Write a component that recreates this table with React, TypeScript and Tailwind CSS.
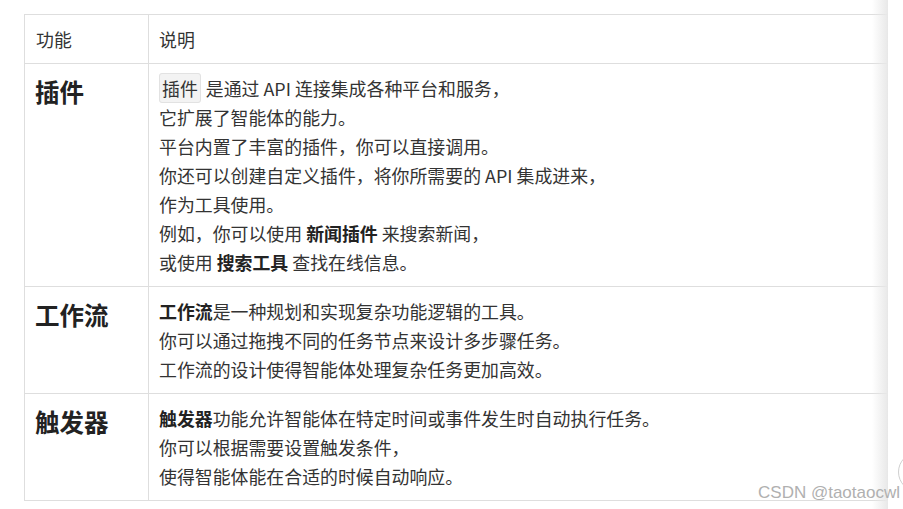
const font = { fontFamily: '"Noto Sans CJK SC", "Noto Sans", sans-serif' };

type Row = { title: string; lines: React.ReactNode[] };

const rows: Row[] = [
  {
    title: "插件",
    lines: [
      <>
        <span className="mr-[5px] rounded-[3px] border border-[#e2e2e2] bg-[#f3f3f3] px-[2px] py-[1px]">插件</span>是通过 API 连接集成各种平台和服务，
      </>,
      "它扩展了智能体的能力。",
      "平台内置了丰富的插件，你可以直接调用。",
      "你还可以创建自定义插件，将你所需要的 API 集成进来，",
      "作为工具使用。",
      <>
        例如，你可以使用 <b className="font-bold text-[#222]">新闻插件</b> 来搜索新闻，
      </>,
      <>
        或使用 <b className="font-bold text-[#222]">搜索工具</b> 查找在线信息。
      </>,
    ],
  },
  {
    title: "工作流",
    lines: [
      <>
        <b className="font-bold text-[#222]">工作流</b>是一种规划和实现复杂功能逻辑的工具。
      </>,
      "你可以通过拖拽不同的任务节点来设计多步骤任务。",
      "工作流的设计使得智能体处理复杂任务更加高效。",
    ],
  },
  {
    title: "触发器",
    lines: [
      <>
        <b className="font-bold text-[#222]">触发器</b>功能允许智能体在特定时间或事件发生时自动执行任务。
      </>,
      "你可以根据需要设置触发条件，",
      "使得智能体能在合适的时候自动响应。",
    ],
  },
];

export default function App() {
  return (
    <div className="relative h-[509px] w-[903px] overflow-hidden bg-white text-[#333]" style={font}>
      <div className="pl-[24px] pt-[14px]">
        <table className="w-[864px] border-collapse text-[17.9px]">
          <thead>
            <tr>
              <th className="w-[124px] border border-[#dedede] pb-[9px] pl-[11px] pt-[10px] text-left font-normal leading-[29px]">
                功能
              </th>
              <th className="border border-[#dedede] pb-[9px] pl-[10px] pt-[10px] text-left font-normal leading-[29px]">
                说明
              </th>
            </tr>
          </thead>
          <tbody>
            {rows.map((r) => (
              <tr key={r.title}>
                <td className="border border-[#dedede] pl-[10px] pt-[10px] align-top text-[24.5px] font-bold leading-[36px] text-[#222]">
                  {r.title}
                </td>
                <td className="border border-[#dedede] pb-[9px] pl-[10px] pt-[10px] align-top leading-[29px]">
                  {r.lines.map((l, i) => (
                    <div key={i} className="whitespace-nowrap">
                      {l}
                    </div>
                  ))}
                </td>
              </tr>
            ))}
          </tbody>
        </table>
      </div>

      {/* right scroll shadow */}
      <div className="absolute right-[15px] top-0 h-full w-[16px] bg-gradient-to-r from-white/0 to-[#e8e8e8]" />
      <div className="absolute right-0 top-0 h-full w-[15px] bg-white" />

      {/* floating button, mostly off screen */}
      <div className="absolute left-[898px] top-[452px] h-[40px] w-[40px] rounded-full border border-[#cfcfcf] bg-white" />

      <div
        className="absolute right-[3px] top-[481px] text-[17px] leading-[24px] text-[#b0b0b0]"
        style={{ fontFamily: '"Liberation Sans", Arial, sans-serif' }}
      >
        CSDN @taotaocwl
      </div>
    </div>
  );
}
